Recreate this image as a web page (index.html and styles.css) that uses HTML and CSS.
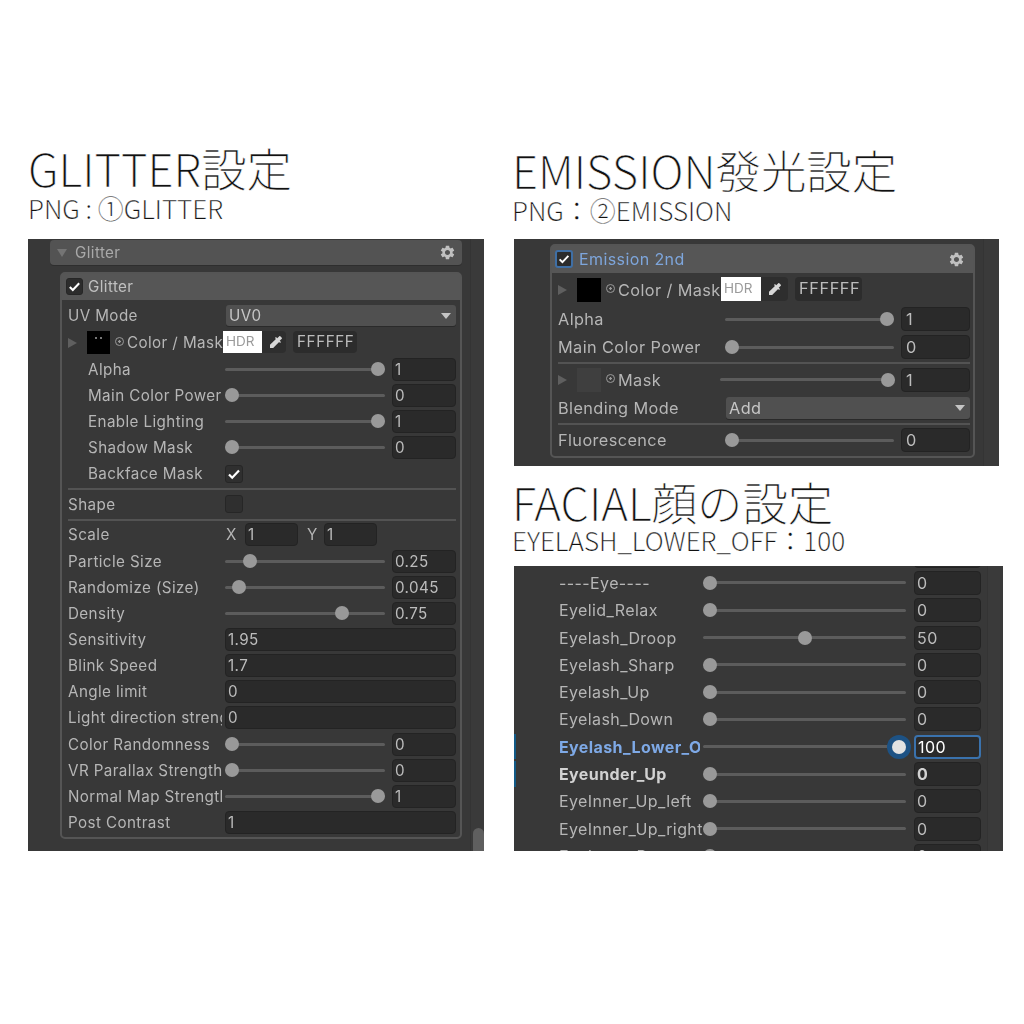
FILE: index.html
```html
<!DOCTYPE html>
<html lang="ja">

<head>
    <meta charset="UTF-8">
    <link rel="stylesheet" href="styles.css">
    <title>Material settings</title>
</head>

<body>
    <svg class="defs" width="0" height="0">
        <symbol id="gear" viewBox="0 0 24 24">
            <path d="M19.14 12.94c.04-.3.06-.61.06-.94 0-.32-.02-.64-.07-.94l2.03-1.58c.18-.14.23-.41.12-.61l-1.92-3.32c-.12-.22-.37-.29-.59-.22l-2.39.96c-.5-.38-1.03-.7-1.62-.94l-.36-2.54c-.04-.24-.24-.41-.48-.41h-3.84c-.24 0-.43.17-.47.41l-.36 2.54c-.59.24-1.13.57-1.62.94l-2.39-.96c-.22-.08-.47 0-.59.22L2.74 8.87c-.12.21-.08.47.12.61l2.03 1.58c-.05.3-.09.63-.09.94s.02.64.07.94l-2.03 1.58c-.18.14-.23.41-.12.61l1.92 3.32c.12.22.37.29.59.22l2.39-.96c.5.38 1.03.7 1.62.94l.36 2.54c.05.24.24.41.48.41h3.84c.24 0 .44-.17.47-.41l.36-2.54c.59-.24 1.13-.56 1.62-.94l2.39.96c.22.08.47 0 .59-.22l1.92-3.32c.12-.22.07-.47-.12-.61l-2.01-1.58zM12 15.6c-1.98 0-3.6-1.62-3.6-3.6s1.62-3.6 3.6-3.6 3.6 1.62 3.6 3.6-1.62 3.6-3.6 3.6z" />
        </symbol>
        <symbol id="dropper" viewBox="0 0 24 24">
            <path d="M20.71 5.63l-2.34-2.34c-.39-.39-1.02-.39-1.41 0l-3.12 3.12-1.93-1.91-1.41 1.41 1.42 1.42L3 16.25V21h4.75l8.92-8.92 1.42 1.42 1.41-1.41-1.92-1.92 3.12-3.12c.4-.4.4-1.03.01-1.42z" />
        </symbol>
        <symbol id="check" viewBox="0 0 16 16">
            <path d="M3 8.5l3.2 3.2L13 4.5" fill="none" stroke="#fff" stroke-width="2.2" />
        </symbol>
    </svg>

    <div class="page">
        <section class="col">
            <h1 class="title">GLITTER設定</h1>
            <p class="sub">PNG : ①GLITTER</p>
            <div class="panel panel-glitter">
                <div class="panel-main">
                    <div class="foldout">
                        <span class="tri-down"></span>
                        <span class="foldout-name">Glitter</span>
                        <svg class="gear"><use href="#gear" /></svg>
                    </div>
                    <div class="group">
                        <div class="group-head">
                            <span class="check"><svg><use href="#check" /></svg></span>
                            <span class="group-name">Glitter</span>
                        </div>
                        <div class="group-body">
                            <div class="row row-tall">
                                <span class="label">UV Mode</span>
                                <div class="dropdown wide"><span>UV0</span><i class="caret"></i></div>
                            </div>
                            <div class="tex-row row-tall">
                                <span class="tri"></span>
                                <span class="thumbnail has-dots"></span>
                                <span class="pick"></span>
                                <span class="tex-label">Color / Mask</span>
                                <span class="color-field"><span class="hdr">HDR</span><svg class="dropper"><use href="#dropper" /></svg></span>
                                <span class="hex">FFFFFF</span>
                            </div>
                            <div class="row">
                                <span class="label indent">Alpha</span>
                                <div class="slider"><i style="--v:1"></i></div>
                                <span class="val">1</span>
                            </div>
                            <div class="row">
                                <span class="label indent">Main Color Power</span>
                                <div class="slider"><i style="--v:0"></i></div>
                                <span class="val">0</span>
                            </div>
                            <div class="row">
                                <span class="label indent">Enable Lighting</span>
                                <div class="slider"><i style="--v:1"></i></div>
                                <span class="val">1</span>
                            </div>
                            <div class="row">
                                <span class="label indent">Shadow Mask</span>
                                <div class="slider"><i style="--v:0"></i></div>
                                <span class="val">0</span>
                            </div>
                            <div class="row">
                                <span class="label indent">Backface Mask</span>
                                <span class="check small"><svg><use href="#check" /></svg></span>
                            </div>
                            <hr class="line">
                            <div class="row">
                                <span class="label">Shape</span>
                                <span class="check small"></span>
                            </div>
                            <hr class="line">
                            <div class="row">
                                <span class="label">Scale</span>
                                <div class="xy">
                                    <span class="axis">X</span><span class="val">1</span>
                                    <span class="axis axis-y">Y</span><span class="val">1</span>
                                </div>
                            </div>
                            <div class="row">
                                <span class="label">Particle Size</span>
                                <div class="slider"><i style="--v:.12"></i></div>
                                <span class="val">0.25</span>
                            </div>
                            <div class="row">
                                <span class="label">Randomize (Size)</span>
                                <div class="slider"><i style="--v:.045"></i></div>
                                <span class="val">0.045</span>
                            </div>
                            <div class="row">
                                <span class="label">Density</span>
                                <div class="slider"><i style="--v:.75"></i></div>
                                <span class="val">0.75</span>
                            </div>
                            <div class="row">
                                <span class="label">Sensitivity</span>
                                <span class="val wide">1.95</span>
                            </div>
                            <div class="row">
                                <span class="label">Blink Speed</span>
                                <span class="val wide">1.7</span>
                            </div>
                            <div class="row">
                                <span class="label">Angle limit</span>
                                <span class="val wide">0</span>
                            </div>
                            <div class="row">
                                <span class="label">Light direction strength</span>
                                <span class="val wide">0</span>
                            </div>
                            <div class="row">
                                <span class="label">Color Randomness</span>
                                <div class="slider"><i style="--v:0"></i></div>
                                <span class="val">0</span>
                            </div>
                            <div class="row">
                                <span class="label">VR Parallax Strength</span>
                                <div class="slider"><i style="--v:0"></i></div>
                                <span class="val">0</span>
                            </div>
                            <div class="row">
                                <span class="label">Normal Map Strength</span>
                                <div class="slider"><i style="--v:1"></i></div>
                                <span class="val">1</span>
                            </div>
                            <div class="row">
                                <span class="label">Post Contrast</span>
                                <span class="val wide">1</span>
                            </div>
                        </div>
                    </div>
                </div>
                <div class="gutter"><span class="scroll-thumb"></span></div>
            </div>
        </section>

        <section class="col col-right">
            <h1 class="title">EMISSION發光設定</h1>
            <p class="sub">PNG：②EMISSION</p>
            <div class="panel panel-emission">
                <div class="panel-main">
                    <div class="group">
                        <div class="group-head">
                            <span class="check focus"><svg><use href="#check" /></svg></span>
                            <span class="group-name blue">Emission 2nd</span>
                            <svg class="gear"><use href="#gear" /></svg>
                        </div>
                        <div class="group-body">
                            <div class="tex-row row-tall">
                                <span class="tri"></span>
                                <span class="thumbnail"></span>
                                <span class="pick"></span>
                                <span class="tex-label">Color / Mask</span>
                                <span class="color-field"><span class="hdr">HDR</span><svg class="dropper"><use href="#dropper" /></svg></span>
                                <span class="hex">FFFFFF</span>
                            </div>
                            <div class="row">
                                <span class="label">Alpha</span>
                                <div class="slider"><i style="--v:1"></i></div>
                                <span class="val">1</span>
                            </div>
                            <div class="row">
                                <span class="label">Main Color Power</span>
                                <div class="slider"><i style="--v:0"></i></div>
                                <span class="val">0</span>
                            </div>
                            <hr class="line">
                            <div class="tex-row mask-row">
                                <span class="tri"></span>
                                <span class="thumbnail empty"></span>
                                <span class="pick"></span>
                                <span class="tex-label">Mask</span>
                                <div class="slider"><i style="--v:1"></i></div>
                                <span class="val">1</span>
                            </div>
                            <div class="row">
                                <span class="label">Blending Mode</span>
                                <div class="dropdown wide"><span>Add</span><i class="caret"></i></div>
                            </div>
                            <hr class="line">
                            <div class="row">
                                <span class="label">Fluorescence</span>
                                <div class="slider"><i style="--v:0"></i></div>
                                <span class="val">0</span>
                            </div>
                        </div>
                    </div>
                </div>
                <div class="gutter"></div>
            </div>

            <h1 class="title title-next">FACIAL顔の設定</h1>
            <p class="sub sub-next">EYELASH_LOWER_OFF：100</p>
            <div class="panel panel-facial">
                <div class="panel-main">
                    <div class="row row-peek">
                        <span class="label"></span>
                        <div class="slider"></div>
                        <span class="val"></span>
                    </div>
                    <div class="row">
                        <span class="label">----Eye----</span>
                        <div class="slider"><i style="--v:0"></i></div>
                        <span class="val">0</span>
                    </div>
                    <div class="row">
                        <span class="label">Eyelid_Relax</span>
                        <div class="slider"><i style="--v:0"></i></div>
                        <span class="val">0</span>
                    </div>
                    <div class="row">
                        <span class="label">Eyelash_Droop</span>
                        <div class="slider"><i style="--v:.5"></i></div>
                        <span class="val">50</span>
                    </div>
                    <div class="row">
                        <span class="label">Eyelash_Sharp</span>
                        <div class="slider"><i style="--v:0"></i></div>
                        <span class="val">0</span>
                    </div>
                    <div class="row">
                        <span class="label">Eyelash_Up</span>
                        <div class="slider"><i style="--v:0"></i></div>
                        <span class="val">0</span>
                    </div>
                    <div class="row">
                        <span class="label">Eyelash_Down</span>
                        <div class="slider"><i style="--v:0"></i></div>
                        <span class="val">0</span>
                    </div>
                    <div class="row row-active marked">
                        <span class="label">Eyelash_Lower_Off</span>
                        <div class="slider"><i style="--v:1"></i></div>
                        <span class="val">100</span>
                    </div>
                    <div class="row row-bold marked">
                        <span class="label">Eyeunder_Up</span>
                        <div class="slider"><i style="--v:0"></i></div>
                        <span class="val">0</span>
                    </div>
                    <div class="row">
                        <span class="label">EyeInner_Up_left</span>
                        <div class="slider"><i style="--v:0"></i></div>
                        <span class="val">0</span>
                    </div>
                    <div class="row">
                        <span class="label">EyeInner_Up_right</span>
                        <div class="slider"><i style="--v:0"></i></div>
                        <span class="val">0</span>
                    </div>
                    <div class="row">
                        <span class="label">EyeInner_Down</span>
                        <div class="slider"><i style="--v:0"></i></div>
                        <span class="val">0</span>
                    </div>
                </div>
                <div class="gutter"></div>
            </div>
        </section>
    </div>
</body>

</html>
```
FILE: styles.css
```css
* {
    padding: 0;
    margin: 0;
    box-sizing: border-box;
}

body {
    background-color: #fff;
    font-family: "Inter", "Noto Sans", sans-serif;
}

.defs {
    position: absolute;
}

.page {
    display: grid;
    grid-template-columns: 456px 489px;
    column-gap: 30px;
    padding: 144px 0 0 28px;
}

.col-right {
    padding-top: 1.5px;
}

/* the installed CJK font has no light cut, the white stroke thins it */
.title {
    font-family: "Noto Sans CJK JP", "Noto Sans", sans-serif;
    font-weight: 300;
    font-size: 45.4px;
    line-height: 46px;
    color: #111;
    -webkit-text-stroke: 0.5px #fff;
    white-space: nowrap;
}

.sub {
    font-family: "Noto Sans CJK JP", "Noto Sans", sans-serif;
    font-weight: 300;
    font-size: 26px;
    line-height: 26px;
    color: #111;
    -webkit-text-stroke: 0.25px #fff;
    margin: 5px 0 18px;
    white-space: nowrap;
}

.col-right .title,
.col-right .sub {
    margin-left: -2px;
}

.col-right .sub {
    margin-top: 5.5px;
    margin-bottom: 16px;
}

.col-right .title-next {
    margin-top: 11.5px;
}

.col-right .sub-next {
    margin-top: 3.5px;
    margin-bottom: 13px;
}

/* panels */
.panel {
    display: flex;
    background-color: #383838;
    color: #b6b6b6;
    overflow: hidden;
    font-size: var(--font);
    letter-spacing: 0.4px;
    filter: blur(0.35px);
}

.panel-main {
    flex: 1;
    min-width: 0;
}

.gutter {
    display: flex;
    flex-direction: column;
    justify-content: flex-end;
    width: var(--gutter);
    background-color: #3a3a3a;
    border-left: 1px solid #343434;
}

.scroll-thumb {
    height: 23px;
    margin-left: 2px;
    background-color: #5f5f5f;
    border-radius: 6px 6px 0 0;
}

.panel-glitter {
    --font: 15.2px;
    --row: 26.15px;
    --label: 154px;
    --val: 64px;
    --gutter: 14px;
    --box: 23px;
    height: 612px;
}

.panel-glitter .panel-main {
    padding: 1px 8px 0 22px;
}

.panel-glitter .group {
    margin-left: 10px;
}

.panel-emission {
    --font: 16.3px;
    --row: 28px;
    --label: 164px;
    --val: 69px;
    --gutter: 16px;
    --box: 24px;
    width: 485px;
    height: 227px;
}

.panel-emission .panel-main {
    padding: 5px 8px 0 36px;
}

.panel-facial {
    --font: 16px;
    --row: 27.3px;
    --label: 141px;
    --val: 67px;
    --gutter: 16px;
    --box: 24px;
    height: 285px;
}

.panel-facial .panel-main {
    padding: 0 6px 0 45px;
}

/* foldout header */
.foldout {
    display: flex;
    align-items: center;
    height: 25px;
    margin-bottom: 7px;
    padding: 0 6px 0 7px;
    background-color: #535353;
    border-radius: 4px;
    box-shadow: 0 1px 0 #2e2e2e;
    color: #a9a9a9;
}

.foldout-name {
    margin-left: 8px;
}

.tri-down {
    width: 0;
    height: 0;
    border-left: 5px solid transparent;
    border-right: 5px solid transparent;
    border-top: 8px solid #747474;
}

.gear {
    width: 17px;
    height: 17px;
    margin-left: auto;
    fill: #c0c0c0;
}

/* group box */
.group {
    border: 2px solid #555;
    border-radius: 5px;
}

.group-head {
    display: flex;
    align-items: center;
    gap: 5px;
    height: 26px;
    padding: 0 3px 2px 4px;
    background-color: #565656;
}

.panel-emission .group-head {
    gap: 6px;
    height: 27px;
    padding: 0 8px 1px 3px;
}

.group-name {
    color: #c0c0c0;
}

.panel-emission .group-name {
    font-size: 16px;
}

.group-name.blue {
    color: #7ea6dc;
}

.group-body {
    padding: 2px 4px 1px 6px;
}

.panel-emission .group-body {
    padding: 2px 3px 2px 6px;
}

.check {
    display: flex;
    flex-shrink: 0;
    width: 17px;
    height: 17px;
    background-color: #2c2c2c;
    border: 1px solid #262626;
    border-radius: 3px;
}

.check svg {
    width: 100%;
    height: 100%;
}

.check.small {
    grid-column: 2;
    width: 18px;
    height: 18px;
    background-color: #2f2f2f;
}

.check.focus {
    border: 2px solid #3f6fa5;
    width: 18px;
    height: 18px;
}

/* property rows */
.row {
    position: relative;
    display: grid;
    grid-template-columns: var(--label) 1fr var(--val);
    column-gap: 3px;
    align-items: center;
    height: var(--row);
}

.row-tall {
    height: 27px;
}

.label {
    overflow: hidden;
    white-space: nowrap;
}

.label.indent {
    padding-left: 20px;
}

.val {
    display: flex;
    align-items: center;
    height: var(--box);
    padding-left: 2px;
    background-color: #2a2a2a;
    border: 1px solid #232323;
    border-radius: 4px;
    color: #bcbcbc;
}

.panel-emission .val {
    padding-left: 4px;
}

.wide {
    grid-column: 2 / 4;
}

.slider {
    position: relative;
    height: 3px;
    margin-right: 4px;
    background-color: #5c5c5c;
    border-radius: 2px;
}

.slider i {
    position: absolute;
    top: -5.5px;
    left: calc((100% - 14px) * var(--v));
    width: 14px;
    height: 14px;
    background-color: #999;
    border-radius: 50%;
}

.dropdown {
    display: flex;
    align-items: center;
    justify-content: space-between;
    height: 21px;
    margin-left: 1px;
    padding: 0 5px 0 3px;
    background-color: #505050;
    border-radius: 3px;
    box-shadow: 0 1px 0 #2a2a2a;
    color: #c6c6c6;
}

.caret {
    width: 0;
    height: 0;
    border-left: 5px solid transparent;
    border-right: 5px solid transparent;
    border-top: 6px solid #c4c4c4;
}

.line {
    height: 2px;
    margin: 1.5px 0 1px;
    border: 0;
    background-color: #535353;
}

.xy {
    grid-column: 2 / 4;
    display: flex;
    align-items: center;
}

.xy .val {
    width: 53px;
}

.axis {
    width: 20px;
    padding-left: 1px;
}

.axis-y {
    width: 18px;
    margin-left: 8px;
}

/* texture rows */
.tex-row {
    display: flex;
    align-items: center;
}

.tri {
    width: 0;
    height: 0;
    margin-right: 10px;
    border-top: 5.5px solid transparent;
    border-bottom: 5.5px solid transparent;
    border-left: 9px solid #5f5f5f;
}

.thumbnail {
    position: relative;
    flex-shrink: 0;
    width: 23px;
    height: 23px;
    background-color: #000;
}

.has-dots::before {
    content: "";
    position: absolute;
    top: 6px;
    left: 8px;
    width: 2px;
    height: 2px;
    background-color: #777;
    box-shadow: 5px 0 #777;
}

.thumbnail.empty {
    background-color: #3f3f3f;
}

.pick {
    flex-shrink: 0;
    width: 9px;
    height: 9px;
    margin: 0 3px 3px 5px;
    border: 1.5px solid #9a9a9a;
    border-radius: 50%;
    background: radial-gradient(circle, #9a9a9a 1px, transparent 1.5px);
}

.tex-label {
    width: 96px;
    white-space: nowrap;
}

.color-field {
    display: flex;
    align-items: center;
    width: 63px;
    height: 22px;
    margin-bottom: 2px;
    background-color: #2e2e2e;
    border-radius: 0 4px 4px 0;
}

.hdr {
    width: 39px;
    height: 100%;
    padding-left: 3px;
    background-color: #fff;
    color: #9a9a9a;
    font-size: 13.5px;
    line-height: 21px;
    letter-spacing: 0;
}

.dropper {
    width: 16px;
    height: 16px;
    margin-left: 6px;
    fill: #d8d8d8;
}

.hex {
    width: 64px;
    height: 22px;
    margin: 0 0 2px 7px;
    padding-left: 4px;
    background-color: #2c2c2c;
    border-radius: 4px;
    color: #bcbcbc;
    line-height: 21px;
    letter-spacing: 0.6px;
}

/* emission sizes */
.panel-emission .tex-row {
    height: 30px;
}

.panel-emission .thumbnail {
    width: 24px;
    height: 24px;
}

.panel-emission .tex-label {
    width: 103px;
}

.panel-emission .color-field {
    width: 67px;
    height: 24px;
}

.panel-emission .hdr {
    width: 40px;
    line-height: 23px;
}

.panel-emission .hex {
    width: 67px;
    height: 24px;
    line-height: 23px;
}

.panel-emission .mask-row {
    height: 29px;
}

.panel-emission .mask-row .tex-label {
    width: 44px;
    flex-shrink: 0;
}

.mask-row .slider {
    flex: 1;
    margin: 0 6px 0 58px;
}

.mask-row .val {
    width: var(--val);
}

.panel-emission .dropdown {
    height: 22px;
    padding-right: 5px;
}

.panel-emission .line {
    margin: 1px 0;
}

/* facial rows */
.row-peek {
    margin-top: -24px;
}

.panel-facial .slider {
    margin-right: 5px;
}

.panel-facial .row:not(.row-active) .label {
    overflow: visible;
}

.row-active .label {
    color: #7ea9e6;
    font-weight: 700;
}

.row-active .val {
    border: 2px solid #3a72ad;
    color: #fff;
}

.row-active .slider i {
    background-color: #e2e2e2;
    box-shadow: 0 0 0 5px #1d5284;
}

.row-bold .label,
.row-bold .val {
    color: #d2d2d2;
    font-weight: 700;
}

.marked::before {
    content: "";
    position: absolute;
    left: -45px;
    top: 1px;
    bottom: 1px;
    width: 2px;
    background-color: #125a86;
}
```
